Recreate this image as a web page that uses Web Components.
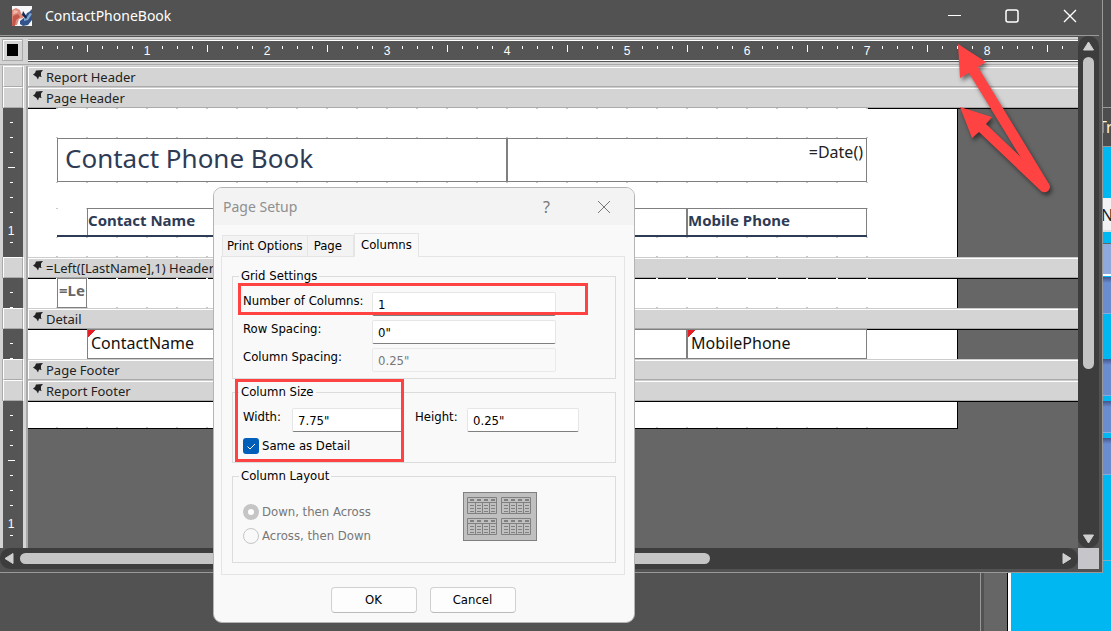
<!DOCTYPE html>
<html lang="en">
<head>
<meta charset="utf-8">
<title>ContactPhoneBook</title>
<style>
  html, body {
    height: 100%;
    margin: 0;
    overflow: hidden;
  }

  body {
    position: relative;
    font-family: "Noto Sans", sans-serif;
    font-size: 13px;
    background: #525252;
  }
</style>
</head>
<body>
<app-backdrop></app-backdrop>

<report-window caption="ContactPhoneBook">
  <report-section caption="Report Header"></report-section>
  <report-section caption="Page Header" rows="149" dots="0 29 74 100 129 148" line="edges">
    <report-control style="left:29px;top:30px;width:450px;height:44px" kind="title">Contact Phone Book</report-control>
    <report-control style="left:479px;top:30px;width:360px;height:44px" kind="date">=Date()</report-control>
    <report-control style="left:59px;top:100px;width:300px;height:28px" kind="heading">Contact Name</report-control>
    <report-control style="left:359px;top:100px;width:300px;height:28px" kind="heading"></report-control>
    <report-control style="left:659px;top:100px;width:180px;height:28px" kind="heading">Mobile Phone</report-control>
    <report-control style="left:29px;top:127px;width:810px;height:2px" kind="rule"></report-control>
  </report-section>
  <report-section caption="=Left([LastName],1) Header" rows="30" dots="0 29" line="full">
    <report-control style="left:29px;top:0;width:30px;height:30px" kind="group">=Le</report-control>
  </report-section>
  <report-section caption="Detail" rows="30" line="full">
    <report-control style="left:59px;top:0;width:300px;height:30px" kind="field" flagged>ContactName</report-control>
    <report-control style="left:359px;top:0;width:300px;height:30px" kind="field"></report-control>
    <report-control style="left:659px;top:0;width:180px;height:30px" kind="field" flagged>MobilePhone</report-control>
  </report-section>
  <report-section caption="Page Footer"></report-section>
  <report-section caption="Report Footer" rows="28" dots="26" line="full" last></report-section>
</report-window>

<page-setup-dialog></page-setup-dialog>
<callout-layer></callout-layer>

<script>
  // Both rulers have 120px per inch and eight ticks to the inch
  const STEP = 15;

  function horizontalTicks(count) {
    let out = '';
    for (let i = 1; i <= count; i++) {
      const x = i * STEP - 1;
      if (i % 8 === 0) {
        out += `<text x="${x}" y="14" text-anchor="middle">${i / 8}</text>`;
      } else if (i % 4 === 0) {
        out += `<rect x="${x}" y="4" width="1" height="7"/>`;
      } else {
        out += `<rect x="${x}" y="5" width="1" height="3"/>`;
      }
    }
    return out;
  }

  function verticalTicks(count) {
    let out = '';
    for (let i = 1; i <= count; i++) {
      const y = i * STEP - 1;
      if (i % 8 === 0) {
        out += `<text x="8" y="${y + 8}" text-anchor="middle">${i / 8}</text>`;
      } else if (i % 4 === 0) {
        out += `<rect x="5" y="${y}" width="7" height="1"/>`;
      } else {
        out += `<rect x="7" y="${y}" width="3" height="1"/>`;
      }
    }
    return out;
  }

  // What shows of the other windows, right of and below the report
  class AppBackdrop extends HTMLElement {
    connectedCallback() {
      this.attachShadow({ mode: "open" }).innerHTML = `
        <style>
          :host {
            position: absolute;
            inset: 0;
            display: grid;
            grid-template: 1fr 58px / 1fr 8px;
            overflow: hidden;
          }
          .strip {
            display: flex;
            flex-direction: column;
            overflow: hidden;
            background: #00b7f1;
            color: #fff4dc;
            font-size: 16px;
          }
          .strip div {
            flex: none;
            box-sizing: border-box;
            overflow: hidden;
            white-space: nowrap;
          }
          .head { height: 107px; background: #4d4d4d; }
          .cap { height: 40px; border: solid #999; border-width: 1px 0; background: #4d4d4d; line-height: 38px; text-indent: -5px; }
          .name { height: 34px; background: #f3f3f3; color: #222; line-height: 34px; text-indent: -2px; border-bottom: 2px solid #ddd; }
          .pale { height: 33px; background: #8ea9dc; border: solid #fff; border-width: 0 0 2px; border-top: 1px solid #666; }
          .row { background: linear-gradient(#44558a, #6a8dd0 6px); border-bottom: 1px solid #8ea9dc; }
          .foot {
            grid-column: 1 / 3;
            display: grid;
            grid-template-columns: 1fr 1px 3px 23px 1px 3px 100px;
          }
          .foot i:nth-child(1) { background: #525252; }
          .foot i:nth-child(2) { background: #999; }
          .foot i:nth-child(3) { background: #525252; }
          .foot i:nth-child(4) { background: #666; }
          .foot i:nth-child(5) { background: #000; }
          .foot i:nth-child(6) { background: #fff; }
          .foot i:nth-child(7) { background: #00b7f1; }
        </style>
        <span></span>
        <div class="strip">
          <div class="head"></div>
          <div class="cap">Tr</div>
          <div style="height:51px"></div>
          <div class="name">N</div>
          <div style="height:11px"></div>
          <div class="pale"></div>
          <div style="height:1px"></div>
          <div class="row" style="height:37px"></div>
          <div style="height:45px"></div>
          <div class="row" style="height:37px"></div>
          <div style="height:5px"></div>
          <div class="row" style="height:32px"></div>
          <div style="height:5px"></div>
          <div class="row" style="height:37px"></div>
          <div style="height:86px;border-bottom:1px solid #8ab"></div>
        </div>
        <div class="foot"><i></i><i></i><i></i><i></i><i></i><i></i><i></i></div>`;
    }
  }
  customElements.define("app-backdrop", AppBackdrop);


  // Report design window: title bar, rulers, sections and scroll bars
  class ReportWindow extends HTMLElement {
    connectedCallback() {
      const caption = this.getAttribute('caption');
      this.attachShadow({ mode: "open" }).innerHTML = `
        <style>
          :host {
            position: absolute;
            inset: 0 8px 58px 0;
            box-sizing: border-box;
            display: flex;
            flex-direction: column;
            border: solid #999;
            border-width: 0 1px 1px 0;
            background: #525252;
          }
          header {
            display: flex;
            align-items: flex-start;
            height: 35px;
            flex: none;
            margin-right: 3px;
            padding-left: 12px;
            border-bottom: 1px solid #999;
            color: #fff;
          }
          h1 {
            flex: 1;
            margin: 0 0 0 13px;
            font-size: 14px;
            font-weight: 400;
            line-height: 32px;
          }
          header svg { display: block; }
          header > svg { margin-top: 6px; }
          header button {
            width: 58px;
            height: 32px;
            padding: 0;
            border: 0;
            background: none;
            display: grid;
            place-items: center;
          }
          .client {
            flex: 1;
            min-height: 0;
            display: grid;
            grid-template: 1fr 21px / 1fr 21px;
            margin: 0 3px 3px 0;
          }
          .view {
            min-width: 0;
            min-height: 0;
            margin-top: 1px;
            display: flex;
            flex-direction: column;
            overflow: hidden;
            background: #666;
          }
          .top {
            flex: none;
            display: grid;
            grid-template-columns: 28px 1fr;
            height: 29px;
            background: linear-gradient(#d4d4d4 27px, #aaa 27px 28px, #d4d4d4 28px);
          }
          .corner {
            box-sizing: border-box;
            width: 21px;
            height: 22px;
            margin: 2px 0 0 2px;
            padding: 0;
            display: grid;
            place-items: center;
            border: 1px solid #aaa;
            background: #d4d4d4;
            box-shadow: inset 1px 1px #fff;
          }
          .corner::after { content: ""; width: 11px; height: 12px; background: #000; }
          .ruler {
            box-sizing: border-box;
            height: 25px;
            padding-top: 4px;
            overflow: hidden;
            background: linear-gradient(#d4d4d4 2px, #aaa 2px 3px, #fff 3px 4px, #555 4px 23px, #fff 23px 24px, #555 24px);
          }
          .ruler svg {
            display: block;
            width: 100%;
            height: 19px;
            fill: #fff;
            font: 12px "Liberation Sans", sans-serif;
          }
          .sections {
            flex: 1;
            display: flex;
            flex-direction: column;
            min-height: 0;
          }
          .bar {
            display: flex;
            align-items: center;
            background: #3d3d3d;
            border-radius: 10px;
          }
          .bar svg { flex: none; display: block; fill: #d0d0d0; }
          .bar i { background: #c5c5c5; border-radius: 6px; }
          .bar span { flex: 1; }
          .bar.v { flex-direction: column; padding: 5px 0 4px; }
          .bar.v i { width: 11px; height: 312px; margin-top: 6px; }
          .bar.h { padding: 0 6px 0 4px; }
          .bar.h i { width: 64.6%; height: 11px; margin-left: 6px; }
          .grip { background: #c6c6ca; }
        </style>
        <header>
          <svg width="20" height="20" viewBox="0 0 20 20" aria-hidden="true">
            <rect width="20" height="20" fill="#f7f7fa"/>
            <path d="M0 4l4-2 4 2 1 3 3 3-1 2-4 1-2 6H0z" fill="#dc8a7c"/>
            <path d="M1 10l5-2 2 3-4 3-1 6H0z" fill="#c4564a"/>
            <path d="M2 4l4 1-1 2-4 1z" fill="#f0b9aa"/>
            <path d="M8 15l5-4 2-4 2-1 3-3v11l-4 5-5 1-3-2z" fill="#33538a"/>
            <path d="M12 12l3-1 3-4 2 1-4 6-4 1z" fill="#7fa6cf"/>
            <path d="M11 5l4 6-1 2-4-4z" fill="#16294f"/>
          </svg>
          <h1>${caption}</h1>
          <button aria-label="Minimize"><svg width="14" height="14"><path d="M1 6.500h13" stroke="#fff"/></svg></button>
          <button aria-label="Maximize"><svg width="14" height="14" fill="none" stroke="#fff" stroke-width="1.5"><rect x="1" y="1" width="12" height="12" rx="2"/></svg></button>
          <button aria-label="Close"><svg width="14" height="14" fill="none" stroke="#fff" stroke-width="1.4"><path d="M1 1l12 12M13 1L1 13"/></svg></button>
        </header>
        <div class="client">
          <div class="view">
            <div class="top">
              <button class="corner" aria-label="Select report"></button>
              <div class="ruler"><svg>${horizontalTicks(69)}</svg></div>
            </div>
            <div class="sections"><slot></slot></div>
          </div>
          <div class="bar v">
            <svg width="11" height="10"><path d="M5.500 1L10.500 9H.5z" stroke="#d0d0d0" stroke-linejoin="round"/></svg>
            <i></i><span></span>
            <svg width="11" height="10"><path d="M.5 1h10L5.500 9z" stroke="#d0d0d0" stroke-linejoin="round"/></svg>
          </div>
          <div class="bar h">
            <svg width="10" height="11"><path d="M9 .5v10L1 5.500z" stroke="#d0d0d0" stroke-linejoin="round"/></svg>
            <i></i><span></span>
            <svg width="10" height="11"><path d="M1 .5v10l8-5z" stroke="#d0d0d0" stroke-linejoin="round"/></svg>
          </div>
          <div class="grip"></div>
        </div>`;
    }
  }
  customElements.define("report-window", ReportWindow);


  // One band of the report, with its ruler and its part of the paper
  class ReportSection extends HTMLElement {
    connectedCallback() {
      const rows = Number(this.getAttribute('rows') || 0);
      const last = this.hasAttribute('last');
      const full = this.getAttribute('line') === 'full';
      const dots = (this.getAttribute('dots') || '').split(' ').filter(Boolean);

      // Black line along the top of the paper, then the rows of grid dots
      let grid = full
        ? '<rect width="930" height="1"/>'
        : '<rect width="28" height="1"/><rect x="839" width="91" height="1"/>';
      for (const y of dots) {
        const fill = full && y === '0' ? '#fff' : '#c8c8c8';
        for (let x = 28; x < 840; x += 30) {
          grid += `<rect x="${x}" y="${y}" width="2" height="1" fill="${fill}"/>`;
        }
      }
      this.attachShadow({ mode: "open" }).innerHTML = `
        <style>
          :host {
            display: grid;
            grid-template-columns: 28px 1fr;
            grid-template-rows: 21px ${last ? '1fr' : rows + 'px'};
            flex: ${last ? '1' : 'none'};
            min-height: 0;
          }
          .gutter {
            grid-row: 1 / 3;
            display: flex;
            flex-direction: column;
            min-height: 0;
            box-sizing: border-box;
            padding-left: 3px;
            background: #d4d4d4;
            border-right: 2px solid #aaa;
          }
          .gutter button {
            flex: none;
            box-sizing: border-box;
            width: 20px;
            height: 21px;
            padding: 0;
            border: 1px solid;
            border-color: #fff #aaa #aaa #fff;
            background: #d4d4d4;
            box-shadow: -1px 0 #aaa, 1px 0 #fff;
          }
          .gutter svg {
            display: block;
            flex: 1;
            width: 20px;
            min-height: 0;
            background: #555;
            fill: #fff;
            font: 12px "Liberation Sans", sans-serif;
          }
          .band {
            box-sizing: border-box;
            display: flex;
            align-items: center;
            gap: 2px;
            padding: 2px 0 0 5px;
            margin: 0;
            background: #d4d4d4;
            border-bottom: 1px solid #aaa;
            box-shadow: inset 0 1px #ccc, inset 1px 2px #fff;
            color: #222;
            font-size: 13px;
            font-weight: 400;
            white-space: nowrap;
          }
          .band svg { margin-bottom: 4px; fill: #222; }
          .surface {
            min-width: 0;
            min-height: 0;
            overflow: hidden;
            background: linear-gradient(#000 1px, transparent 1px);
          }
          .paper {
            position: relative;
            box-sizing: border-box;
            width: 930px;
            height: ${rows}px;
            background: #fff;
            border-right: 1px solid #000;
            ${last ? 'border-bottom: 1px solid #000;' : ''}
          }
          .paper > svg { display: block; width: 100%; height: 100%; }
        </style>
        <div class="gutter">
          <button aria-label="Select section"></button>
          ${rows ? `<svg height="0">${verticalTicks(last ? 9 : Math.floor(rows / STEP))}</svg>` : ''}
        </div>
        <h2 class="band">
          <svg width="11" height="10"><path d="M3 .5L10 0 8 2.500V6L9 7 6 6.500 5 9.500 3.500 7 0 4.500 2 3z"/></svg>
          <span>${this.getAttribute('caption')}</span>
        </h2>
        ${rows ? `<div class="surface"><div class="paper"><svg>${grid}</svg><slot></slot></div></div>` : ''}`;
    }
  }
  customElements.define("report-section", ReportSection);


  // A label or text box that stands freely on the paper
  class ReportControl extends HTMLElement {
    connectedCallback() {
      this.attachShadow({ mode: "open" }).innerHTML = `
        <style>
          :host {
            position: absolute;
            box-sizing: border-box;
            overflow: hidden;
            white-space: nowrap;
            border: 1px solid #808080;
            color: #111;
            font-size: 16px;
            line-height: 22px;
          }
          :host([kind="title"]) {
            padding-left: 7px;
            color: #2e3b55;
            font-size: 26px;
            line-height: 38px;
          }
          :host([kind="date"]) {
            padding: 2px 3px 0 0;
            color: #222;
            text-align: right;
          }
          :host([kind="heading"]) {
            color: #2e3b55;
            font-size: 15px;
            font-weight: 700;
          }
          :host([kind="group"]) {
            padding-left: 1px;
            color: #666;
            font-size: 15px;
            font-weight: 700;
          }
          :host([kind="field"]) { padding: 2px 3px; }
          :host([kind="rule"]) { border: 0; background: #2e3b55; }
          :host([flagged]) { background: linear-gradient(135deg, #e81c24 5px, transparent 5px); }
        </style>
        <slot></slot>`;
    }
  }
  customElements.define("report-control", ReportControl);


  // Label and text box of the dialog
  class SetupField extends HTMLElement {
    connectedCallback() {
      this.attachShadow({ mode: "open" }).innerHTML = `
        <style>
          :host {
            display: grid;
            grid-template-columns: var(--label, 129px) var(--box, 184px);
            align-items: start;
          }
          label { line-height: 18px; white-space: nowrap; }
          input {
            box-sizing: border-box;
            width: 100%;
            height: 24px;
            margin: 0;
            padding: 0 5px;
            border: 1px solid #e6e6e6;
            border-bottom-color: #808080;
            border-radius: 2px;
            background: #fff;
            color: #000;
            font: inherit;
          }
          input:disabled {
            border-color: #eaeaea;
            background: #f9f9f9;
            color: #777;
          }
        </style>
        <label for="box">${this.getAttribute('label')}</label>
        <input id="box" type="text" ${this.hasAttribute('disabled') ? 'disabled' : ''}>`;
      this.shadowRoot.querySelector('input').value = this.getAttribute('value');
    }
  }
  customElements.define("setup-field", SetupField);


  // Titled frame round a group of settings
  class SetupGroup extends HTMLElement {
    connectedCallback() {
      this.attachShadow({ mode: "open" }).innerHTML = `
        <style>
          :host { display: block; }
          fieldset {
            min-width: 0;
            margin: 0;
            padding: 8px 10px 6px;
            border: 1px solid #dcdcdc;
          }
          legend {
            margin-left: -4px;
            padding: 0 2px;
            line-height: 16px;
          }
        </style>
        <fieldset>
          <legend>${this.getAttribute('caption')}</legend>
          <slot></slot>
        </fieldset>`;
    }
  }
  customElements.define("setup-group", SetupGroup);


  class PageSetupDialog extends HTMLElement {
    connectedCallback() {
      // The preview has four small tables, two by two
      let tables = '';
      for (const [x, y] of [[4, 5], [38, 5], [4, 26], [38, 26]]) {
        tables += `<g transform="translate(${x} ${y})"><path d="M.5.5h29v16H.5zM.5 5.500h29M8.500 5.500v11M15.500 5.500v11M22.500 5.500v11"/>`;
        for (const c of [3, 10, 17, 24]) {
          tables += `<path d="M${c} 3h4" stroke-width="2"/><path d="M${c} 8.500h4M${c} 11.500h4M${c} 14.500h4"/>`;
        }
        tables += '</g>';
      }
      this.attachShadow({ mode: "open" }).innerHTML = `
        <style>
          :host {
            position: absolute;
            left: 213px;
            top: 187px;
            width: 422px;
            box-sizing: border-box;
            border: 1px solid #b4b4b4;
            border-radius: 9px;
            overflow: hidden;
            background: #f9f9f9;
            color: #000;
            font: 13px/16px "DejaVu Sans Condensed", "DejaVu Sans", sans-serif;
          }
          header {
            display: flex;
            align-items: center;
            height: 37px;
            padding: 0 2px 0 9px;
            background: #f3f3f3;
            color: #8f8f8f;
            font-family: "Noto Sans", sans-serif;
          }
          h2 { flex: 1; margin: 0; font-size: 14px; font-weight: 400; }
          header button {
            width: 57px;
            height: 36px;
            padding: 0;
            border: 0;
            background: none;
            color: #777;
            font: 16px "Noto Sans", sans-serif;
          }
          header svg { display: block; margin: 0 auto; }
          nav {
            display: flex;
            align-items: flex-end;
            margin: 8px 0 0 8px;
            height: 23px;
          }
          nav button {
            box-sizing: border-box;
            height: 21px;
            padding: 0 4px;
            border: 1px solid #e5e5e5;
            border-bottom: 0;
            background: #f3f3f3;
            color: #000;
            font: inherit;
          }
          nav button + button { border-left: 0; }
          nav button:nth-child(2) { padding: 0 11px 0 6px; }
          nav button[aria-selected="true"] {
            position: relative;
            height: 24px;
            margin-bottom: -1px;
            padding: 0 6px 2px;
            border-left: 1px solid #e5e5e5;
            background: #f9f9f9;
          }
          .panel {
            box-sizing: border-box;
            margin: 0 9px 0 7px;
            padding: 11px 8px 11px 10px;
            border: 1px solid #e5e5e5;
            display: grid;
            gap: 5px;
          }
          .fields { display: grid; gap: 4px; }
          .size { display: flex; gap: 11px; }
          .width { --label: 49px; --box: 112px; }
          .height { --label: 52px; --box: 112px; }
          .choice { display: flex; align-items: center; gap: 3px; height: 16px; }
          .choice input {
            appearance: none;
            box-sizing: border-box;
            flex: none;
            width: 16px;
            height: 16px;
            margin: 0;
          }
          .same { margin: 6px 0 2px; }
          .same input {
            border-radius: 3px;
            background: #005fb8 url('data:image/svg+xml,<svg xmlns="http://www.w3.org/2000/svg" width="16" height="16"><path d="M4.500 8.500l2.500 2.500 5-5" fill="none" stroke="white"/></svg>');
          }
          .layout { display: grid; grid-template-columns: 220px 1fr; padding-bottom: 15px; }
          .layout svg { display: block; }
          .radios { display: grid; align-content: start; gap: 8px; padding-top: 12px; color: #777; }
          .radios input { border: 1px solid #c5c5c5; border-radius: 50%; }
          .radios input:checked { border-width: 5px; background: #fff; }
          .layout { padding-bottom: 12px; }
          footer {
            display: flex;
            justify-content: center;
            gap: 13px;
            padding: 12px 2px 9px 0;
          }
          footer button {
            box-sizing: border-box;
            width: 86px;
            height: 26px;
            padding: 0;
            border: 1px solid #d0d0d0;
            border-bottom-color: #bbb;
            border-radius: 4px;
            background: #fdfdfd;
            color: #000;
            font: inherit;
          }
        </style>
        <header>
          <h2>Page Setup</h2>
          <button aria-label="Help">?</button>
          <button aria-label="Close"><svg width="14" height="14" stroke="#777"><path d="M1 1l12 12M13 1L1 13"/></svg></button>
        </header>
        <nav role="tablist">
          <button role="tab">Print Options</button>
          <button role="tab">Page</button>
          <button role="tab" aria-selected="true">Columns</button>
        </nav>
        <div class="panel" role="tabpanel">
          <setup-group caption="Grid Settings">
            <div class="fields">
              <setup-field label="Number of Columns:" value="1"></setup-field>
              <setup-field label="Row Spacing:" value='0"'></setup-field>
              <setup-field label="Column Spacing:" value='0.25"' disabled></setup-field>
            </div>
          </setup-group>
          <setup-group caption="Column Size">
            <div class="size">
              <setup-field class="width" label="Width:" value='7.75"'></setup-field>
              <setup-field class="height" label="Height:" value='0.25"'></setup-field>
            </div>
            <div class="choice same"><input type="checkbox" id="same" checked><label for="same">Same as Detail</label></div>
          </setup-group>
          <setup-group caption="Column Layout">
            <div class="layout">
              <div class="radios">
                <div class="choice"><input type="radio" name="order" id="down" checked disabled><label for="down">Down, then Across</label></div>
                <div class="choice"><input type="radio" name="order" id="across" disabled><label for="across">Across, then Down</label></div>
              </div>
              <svg width="74" height="49" fill="none" stroke="#808080" aria-hidden="true">
                <rect x=".5" y=".5" width="73" height="48" fill="#c0c0c0"/>${tables}
              </svg>
            </div>
          </setup-group>
        </div>
        <footer>
          <button>OK</button>
          <button>Cancel</button>
        </footer>`;
    }
  }
  customElements.define("page-setup-dialog", PageSetupDialog);


  // Red frames and arrows over everything else
  class CalloutLayer extends HTMLElement {
    connectedCallback() {
      this.attachShadow({ mode: "open" }).innerHTML = `
        <style>
          :host { position: absolute; inset: 0; pointer-events: none; }
          svg { display: block; width: 100%; height: 100%; }
          .arrows { fill: #ff4343; filter: drop-shadow(2px 3px 2px rgba(0, 0, 0, .5)); }
        </style>
        <svg aria-hidden="true">
          <g fill="none" stroke="#ff4343" stroke-width="3">
            <rect x="239.500" y="284.500" width="347" height="29"/>
            <rect x="236.500" y="380.500" width="166" height="80"/>
          </g>
          <g class="arrows">
            <path d="M958 44L986 62 978 67 1049 184A5 5 0 0 1 1040 189L969 73 960 78z"/>
            <path d="M960 107L992 117 986 124 1048 183A5 5 0 0 1 1041 191L979 132 972 138z"/>
          </g>
        </svg>`;
    }
  }
  customElements.define("callout-layer", CalloutLayer);
</script>
</body>
</html>
